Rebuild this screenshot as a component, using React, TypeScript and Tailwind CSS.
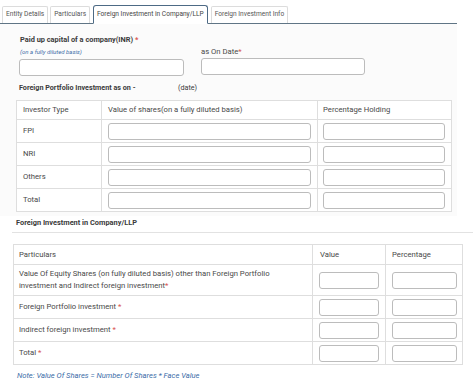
const font = { fontFamily: 'Roboto, "Liberation Sans", sans-serif' };

const tabs = ["Entity Details", "Particulars", "Foreign Investment in Company/LLP", "Foreign Investment Info"];

function Input({ className = "" }: { className?: string }) {
  return <div className={`h-[17px] rounded-[3px] border border-[#bcbcbc] bg-white ${className}`} />;
}

function Req() {
  return <span className="text-[#d9534f]">*</span>;
}

export default function App() {
  return (
    <div className="w-[474px] h-[390px] bg-white text-[7.7px] text-[#484848] overflow-hidden" style={font}>
      <div className="w-[457px] flex items-end gap-[2px] pl-[2px] pt-[5px] border-b border-[#5f7585] text-[6.6px]">
        {tabs.map((t, i) =>
          i === 2 ? (
            <div key={t} className="h-[19px] -mb-px px-[3px] flex items-center border border-[#4d6a85] border-b-white rounded-t-[3px] bg-white text-[#444] mx-[1px]">
              {t}
            </div>
          ) : (
            <div key={t} className="h-[17px] px-[3px] flex items-center border border-b-0 border-[#dcdcdc] rounded-t-[2px] bg-white text-[#555]">
              {t}
            </div>
          )
        )}
      </div>

      <div className="w-[457px] bg-[#fbfbfb] pt-[10px] pb-[4px]">
        <div className="flex pl-[19px]">
          <div className="w-[165px]">
            <div className="font-bold text-[#3a3a3a] text-[7.4px] pl-[1px] h-[12px]">
              Paid up capital of a company(INR) <Req />
            </div>
            <div className="italic text-[6px] text-[#3b6da8] pl-[1px] h-[13px] pt-[1px]">(on a fully diluted basis)</div>
            <Input className="w-[165px]" />
          </div>
          <div className="ml-[17px] pt-[12px]">
            <div className="h-[13px]">
              as On Date<Req />
            </div>
            <Input className="w-[164px] mt-[-1px]" />
          </div>
        </div>

        <div className="flex pl-[19px] mt-[7px] font-bold text-[7.2px] text-[#3a3a3a] h-[15px]">
          <span className="w-[159px]">Foreign Portfolio Investment as on -</span>
          <span className="font-normal">(date)</span>
        </div>

        <table className="ml-[16px] mt-[2px] w-[436px] border-collapse bg-white">
          <tbody>
            <tr className="h-[19px]">
              <td className="w-[85px] border border-[#dedede] pl-[6px]">Investor Type</td>
              <td className="w-[216px] border border-[#dedede] pl-[6px]">Value of shares(on a fully diluted basis)</td>
              <td className="border border-[#dedede] pl-[5px]">Percentage Holding</td>
            </tr>
            {["FPI", "NRI", "Others", "Total"].map((r) => (
              <tr key={r} className="h-[23px]">
                <td className="border border-[#dedede] pl-[6px]">{r}</td>
                <td className="border border-[#dedede] pl-[6px] pr-[6px]">
                  <Input />
                </td>
                <td className="border border-[#dedede] pl-[5px] pr-[6px]">
                  <Input />
                </td>
              </tr>
            ))}
          </tbody>
        </table>
      </div>

      <div className="w-[461px] ml-[12px] border-b border-[#e2e2e2] pl-[4px] pt-[1px] pb-[4px] font-bold text-[7.4px] text-[#3a3a3a]">
        Foreign Investment in Company/LLP
      </div>

      <table className="ml-[13px] mt-[11px] w-[450px] border-collapse bg-white">
        <tbody>
          <tr className="h-[20px]">
            <td className="w-[299px] border border-[#dedede] pl-[5px]">Particulars</td>
            <td className="w-[73px] border border-[#dedede] pl-[7px]">Value</td>
            <td className="border border-[#dedede] pl-[6px]">Percentage</td>
          </tr>
          <tr className="h-[31px]">
            <td className="border border-[#dedede] pl-[5px] leading-[12px]">
              Value Of Equity Shares (on fully diluted basis) other than Foreign Portfolio
              <br />
              investment and Indirect foreign investment<Req />
            </td>
            <td className="border border-[#dedede] px-[6px]">
              <Input />
            </td>
            <td className="border border-[#dedede] pl-[6px] pr-[5px]">
              <Input />
            </td>
          </tr>
          {["Foreign Portfolio investment", "Indirect foreign investment", "Total"].map((r) => (
            <tr key={r} className="h-[23px]">
              <td className="border border-[#dedede] pl-[5px]">
                {r} <Req />
              </td>
              <td className="border border-[#dedede] px-[6px]">
                <Input />
              </td>
              <td className="border border-[#dedede] pl-[6px] pr-[5px]">
                <Input />
              </td>
            </tr>
          ))}
        </tbody>
      </table>

      <div className="ml-[17px] mt-[5px] italic text-[#3b6da8] text-[7.6px]">
        Note: Value Of Shares = Number Of Shares * Face Value
      </div>
    </div>
  );
}
